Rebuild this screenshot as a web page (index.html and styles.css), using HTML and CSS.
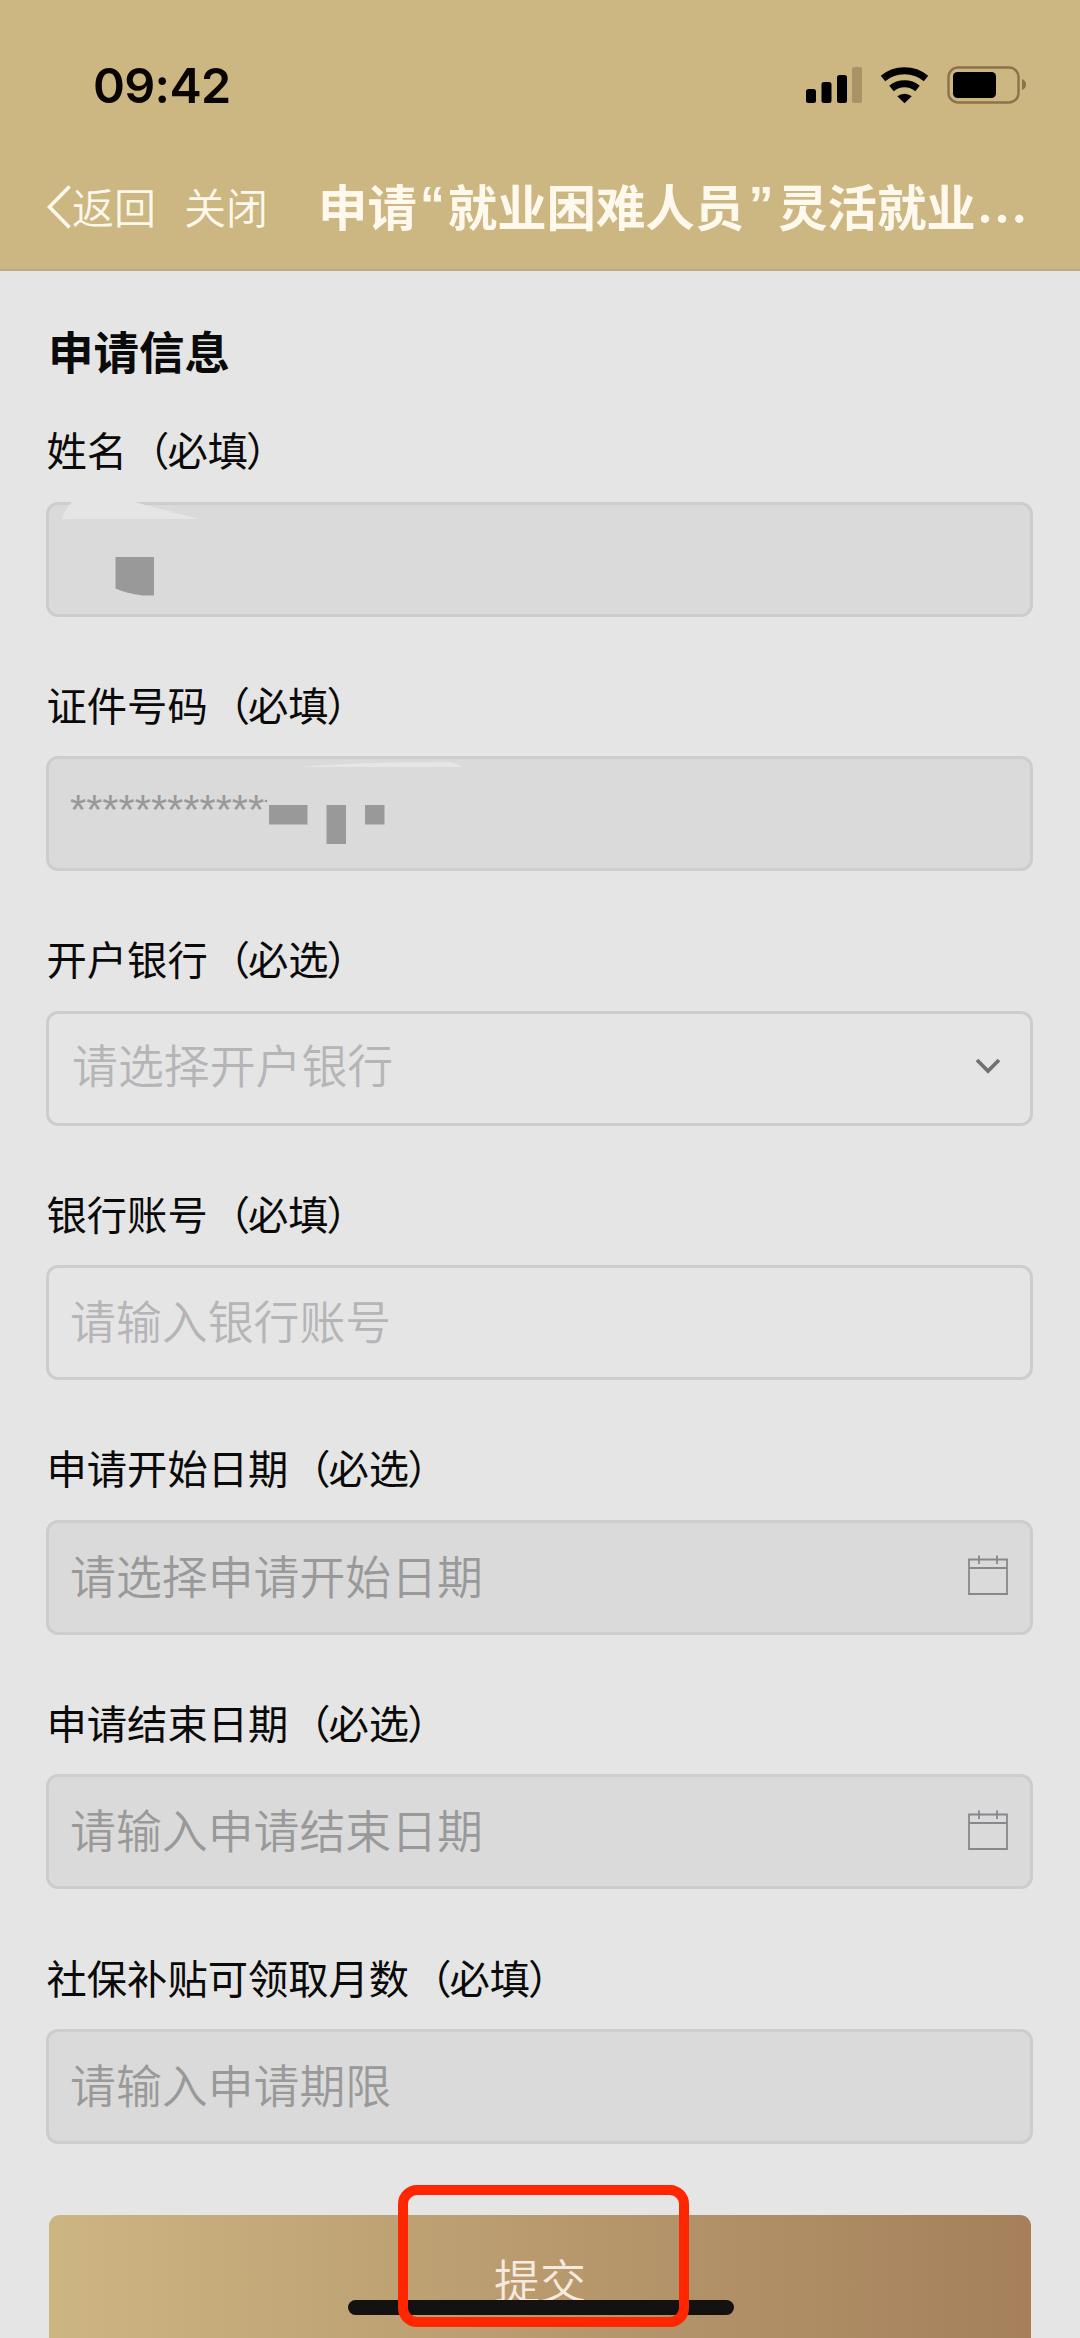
FILE: index.html
```html
<!DOCTYPE html>
<html lang="zh-CN">
<head>
<meta charset="utf-8">
<title>申请信息</title>
<link rel="stylesheet" href="styles.css">
</head>
<body>
<div class="screen">
  <header class="header">
    <div class="status">
      <span class="time">09:42</span>
      <svg class="status-icons" width="224" height="40" viewBox="0 0 224 40">
        <rect x="2" y="24" width="10" height="14" rx="2.5"/>
        <rect x="17.5" y="17" width="10" height="21" rx="2.5"/>
        <rect x="33" y="10" width="10" height="28" rx="2.5"/>
        <rect x="48" y="2" width="10" height="36" rx="2.5" fill="#a89365"/>
        <g fill="none" stroke="#000" stroke-width="7">
          <path d="M79 13.500a34 34 0 0 1 43 0"/>
          <path d="M87.500 23.500a20.500 20.500 0 0 1 26 0"/>
        </g>
        <path d="M93.300 31.300a11.500 11.500 0 0 1 14.400 0L100.500 38.200z"/>
        <rect x="144.500" y="2.500" width="70" height="35" rx="9.500" fill="none" stroke="#8a734a" stroke-width="2.400"/>
        <rect x="149" y="7" width="43" height="26" rx="4.500"/>
        <path d="M218 14v11q4-1.500 4-5.500t-4-5.500z" fill="#8a734a"/>
      </svg>
    </div>
    <nav class="nav">
      <a class="back"><svg width="26" height="44" viewBox="0 0 26 44"><path d="M23.500 1.500 3.500 22l20 20.500" fill="none" stroke="#fff8ec" stroke-width="3.600"/></svg>返回</a>
      <a class="close">关闭</a>
      <h1 class="title">申请<span class="quote">“</span>就业困难人员<span class="quote end">”</span>灵活就业<span class="dots">...</span></h1>
    </nav>
  </header>
  <main class="form">
    <h2 class="heading">申请信息</h2>
    <section class="group">
      <label class="label">姓名<span class="open">（</span>必填<span class="shut">）</span></label>
      <div class="field disabled">
        <svg class="mask" width="480" height="110" viewBox="0 0 480 110">
          <path d="M22-3h63l65 17H13q4-12 10-17z" fill="#e5e5e5"/>
          <path d="M66.500 52H105v38.500H93.500q-16-2-27-7z" fill="#999"/>
        </svg>
      </div>
    </section>
    <section class="group">
      <label class="label">证件号码<span class="open">（</span>必填<span class="shut">）</span></label>
      <div class="field disabled">
        <span class="stars">************</span>
        <svg class="mask" width="480" height="110" viewBox="0 0 480 110">
          <path d="M250 8q60-5 145-5 12 0 18 5z" fill="#e6e6e6"/>
          <circle cx="217" cy="42" r="1.300" fill="#999"/>
          <path d="M220 46h38.500v19.500H220zM277.500 46H297v39h-19.500zM316 46h19.500v19.500H316z" fill="#999"/>
        </svg>
      </div>
    </section>
    <section class="group">
      <label class="label">开户银行<span class="open">（</span>必选<span class="shut">）</span></label>
      <div class="field select">
        <span class="hint">请选择开户银行</span>
        <svg class="arrow" width="28" height="20" viewBox="0 0 28 20"><path d="m3 4 11 11L25 4" fill="none" stroke="#727276" stroke-width="3.800"/></svg>
      </div>
    </section>
    <section class="group">
      <label class="label">银行账号<span class="open">（</span>必填<span class="shut">）</span></label>
      <div class="field"><span class="hint">请输入银行账号</span></div>
    </section>
    <section class="group">
      <label class="label">申请开始日期<span class="open">（</span>必选<span class="shut">）</span></label>
      <div class="field disabled">
        <span class="hint">请选择申请开始日期</span>
        <svg class="calendar" width="40" height="42" viewBox="0 0 40 42"><path d="M1 5.500h38V40H1zM1 14h38M11 1.500v8.500M29 1.500v8.500" fill="none" stroke="#88888c" stroke-width="1.800"/></svg>
      </div>
    </section>
    <section class="group">
      <label class="label">申请结束日期<span class="open">（</span>必选<span class="shut">）</span></label>
      <div class="field disabled">
        <span class="hint">请输入申请结束日期</span>
        <svg class="calendar" width="40" height="42" viewBox="0 0 40 42"><path d="M1 5.500h38V40H1zM1 14h38M11 1.500v8.500M29 1.500v8.500" fill="none" stroke="#88888c" stroke-width="1.800"/></svg>
      </div>
    </section>
    <section class="group">
      <label class="label">社保补贴可领取月数<span class="open">（</span>必填<span class="shut">）</span></label>
      <div class="field disabled"><span class="hint">请输入申请期限</span></div>
    </section>
    <button class="submit">提交</button>
  </main>
  <div class="home-bar"></div>
  <div class="highlight"></div>
</div>
</body>
</html>
```
FILE: styles.css
```css
* { box-sizing: border-box; }

body {
  margin: 0;
  background: #e5e5e5;
  font-family: "Noto Sans CJK SC", sans-serif;
  color: #0a0a0a;
}

.screen {
  position: relative;
  width: 1080px;
  height: 2338px;
  overflow: hidden;
}

.header {
  height: 271px;
  background: #ccb682;
  border-bottom: 2px solid #bcab86;
}

.status {
  display: flex;
  justify-content: space-between;
  align-items: center;
  height: 170px;
  padding: 0 52px 0 93px;
}

.time {
  padding-top: 2px;
  font: 600 48.5px/60px Inter, sans-serif;
  letter-spacing: -0.7px;
  color: #0a0502;
}

.nav {
  display: flex;
  align-items: center;
  height: 70px;
  padding-left: 46px;
  color: #fff8ec;
  font-size: 42px;
  font-weight: 350;
  white-space: nowrap;
}

.back {
  display: flex;
  align-items: center;
}

.back svg { margin-top: 3px; }

.close { margin-left: 28px; }

.title {
  display: flex;
  margin: 0 0 0 50px;
  font-size: 49.4px;
  font-weight: 700;
  line-height: 68px;
}

.quote {
  width: 31px;
  text-align: center;
  font-family: "Liberation Sans", sans-serif;
}

.end { width: 34px; }

.dots {
  padding-left: 1px;
  font-family: Inter, sans-serif;
  letter-spacing: 0.6px;
}

.form { padding: 45px 46px 0; }

.heading {
  margin: 0 0 32px 2px;
  font-size: 45.5px;
  font-weight: 700;
  line-height: 68px;
}

.group { height: 254.6px; }

.label {
  display: block;
  height: 85.5px;
  padding-left: 0.5px;
  font-size: 40.3px;
  line-height: 66px;
  white-space: nowrap;
}

.open { margin: 0 -2px 0 2px; }

.shut { margin-left: -2px; }

.field {
  position: relative;
  display: flex;
  align-items: center;
  justify-content: space-between;
  width: 987px;
  height: 115px;
  padding: 0 22px 4px 21px;
  border: 3px solid #cdcdcd;
  border-radius: 12px;
  color: #b5b5b7;
}

.select { padding-left: 23px; }

.disabled {
  background: #dadada;
  color: #999;
}

.hint {
  margin-top: -3px;
  font-size: 45.9px;
  font-weight: 350;
  line-height: 68px;
}

.select .hint { margin-top: -6px; }

.stars {
  margin-top: -4px;
  font: 41.6px/50px "Liberation Sans", sans-serif;
}

.mask {
  position: absolute;
  left: 0;
  top: 0;
  overflow: visible;
}

.arrow { margin-right: 6px; }

.submit {
  display: block;
  width: 982px;
  height: 140px;
  margin: 17px 0 0 3px;
  padding: 0 0 14px;
  border: 0;
  border-radius: 11px 11px 0 0;
  background: linear-gradient(90deg, #cdb582, #b89a6e 50%, #a5805b);
  color: #f6eadf;
  font: 350 46px/68px "Noto Sans CJK SC", sans-serif;
}

.home-bar {
  position: absolute;
  left: 348px;
  top: 2300px;
  width: 386px;
  height: 15px;
  border-radius: 8px;
  background: #141210;
}

.highlight {
  position: absolute;
  left: 398px;
  top: 2185px;
  width: 291px;
  height: 142px;
  border: 10px solid #ff2600;
  border-radius: 19px;
}
```
